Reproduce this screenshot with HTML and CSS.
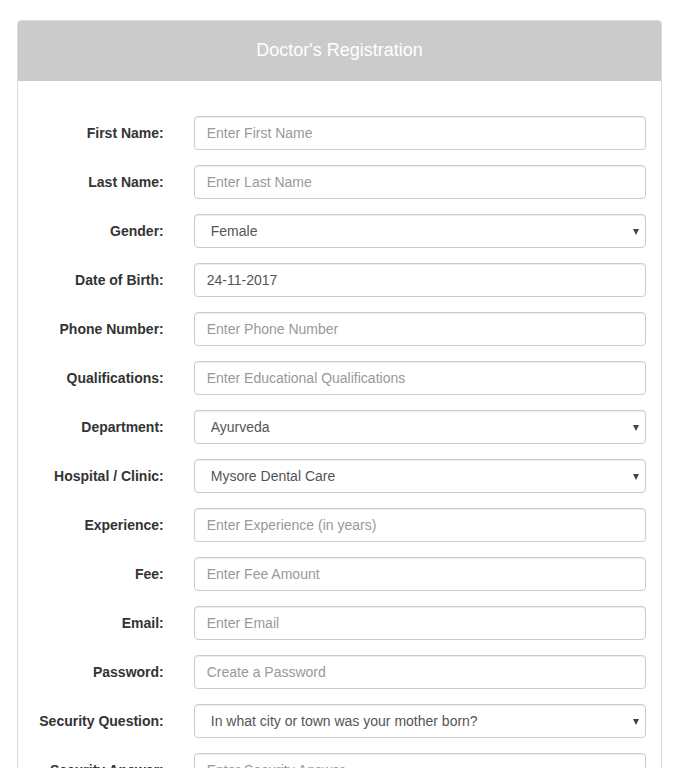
FILE: index.html
```html
<!DOCTYPE html>
<html>
<head>
<meta charset="utf-8">
<link rel="stylesheet" href="styles.css">
</head>
<body>
<div class="page">
  <div class="panel">
    <div class="panel-heading">Doctor's Registration</div>
    <form class="panel-body">
      <div class="form-group"><label class="label">First Name:</label><div class="field"><input class="control" placeholder="Enter First Name"></div></div>
      <div class="form-group"><label class="label">Last Name:</label><div class="field"><input class="control" placeholder="Enter Last Name"></div></div>
      <div class="form-group"><label class="label">Gender:</label><div class="field select-wrap"><select class="control select"><option>Female</option><option>Male</option></select></div></div>
      <div class="form-group"><label class="label">Date of Birth:</label><div class="field"><input class="control" value="24-11-2017"></div></div>
      <div class="form-group"><label class="label">Phone Number:</label><div class="field"><input class="control" placeholder="Enter Phone Number"></div></div>
      <div class="form-group"><label class="label">Qualifications:</label><div class="field"><input class="control" placeholder="Enter Educational Qualifications"></div></div>
      <div class="form-group"><label class="label">Department:</label><div class="field select-wrap"><select class="control select"><option>Ayurveda</option></select></div></div>
      <div class="form-group"><label class="label">Hospital / Clinic:</label><div class="field select-wrap"><select class="control select"><option>Mysore Dental Care</option></select></div></div>
      <div class="form-group"><label class="label">Experience:</label><div class="field"><input class="control" placeholder="Enter Experience (in years)"></div></div>
      <div class="form-group"><label class="label">Fee:</label><div class="field"><input class="control" placeholder="Enter Fee Amount"></div></div>
      <div class="form-group"><label class="label">Email:</label><div class="field"><input class="control" placeholder="Enter Email"></div></div>
      <div class="form-group"><label class="label">Password:</label><div class="field"><input class="control" type="password" placeholder="Create a Password"></div></div>
      <div class="form-group"><label class="label">Security Question:</label><div class="field select-wrap"><select class="control select"><option>In what city or town was your mother born?</option></select></div></div>
      <div class="form-group"><label class="label">Security Answer:</label><div class="field"><input class="control" placeholder="Enter Security Answer"></div></div>
    </form>
  </div>
</div>
</body>
</html>
```

FILE: styles.css
```css
* { box-sizing: border-box; }
html, body { margin: 0; padding: 0; background: #fff; }
body {
  font-family: "Liberation Sans", Arial, sans-serif;
  font-size: 14px;
  color: #333;
  overflow: hidden;
}
.page {
  padding: 20px 28px 0 17px;
}
.panel {
  border: 1px solid #dcdcdc;
  border-radius: 4px;
  background: #fff;
}
.panel-heading {
  background: #cbcbcb;
  color: #fff;
  font-size: 18px;
  text-align: center;
  height: 60px;
  line-height: 58px;
  border-radius: 3px 3px 0 0;
}
.panel-body {
  padding: 35px 0 0 0;
  margin: 0;
}
.form-group {
  display: grid;
  grid-template-columns: 25% 75%;
  align-items: center;
  margin-bottom: 15px;
}
.label {
  text-align: right;
  font-weight: bold;
  padding-right: 15px;
  color: #333;
}
.field {
  padding: 0 15px;
  position: relative;
}
.control {
  display: block;
  width: 100%;
  height: 34px;
  padding: 6px 12px;
  font-family: "Liberation Sans", Arial, sans-serif;
  font-size: 14px;
  color: #555;
  background: #fff;
  border: 1px solid #ccc;
  border-radius: 4px;
  box-shadow: inset 0 1px 1px rgba(0,0,0,.075);
  outline: none;
}
.control::placeholder { color: #999; }
.select {
  -webkit-appearance: none;
  appearance: none;
  padding-left: 16px;
}
.select-wrap::after {
  content: "";
  position: absolute;
  right: 22px;
  top: 15px;
  border-left: 3px solid transparent;
  border-right: 3px solid transparent;
  border-top: 6px solid #444;
}
```
